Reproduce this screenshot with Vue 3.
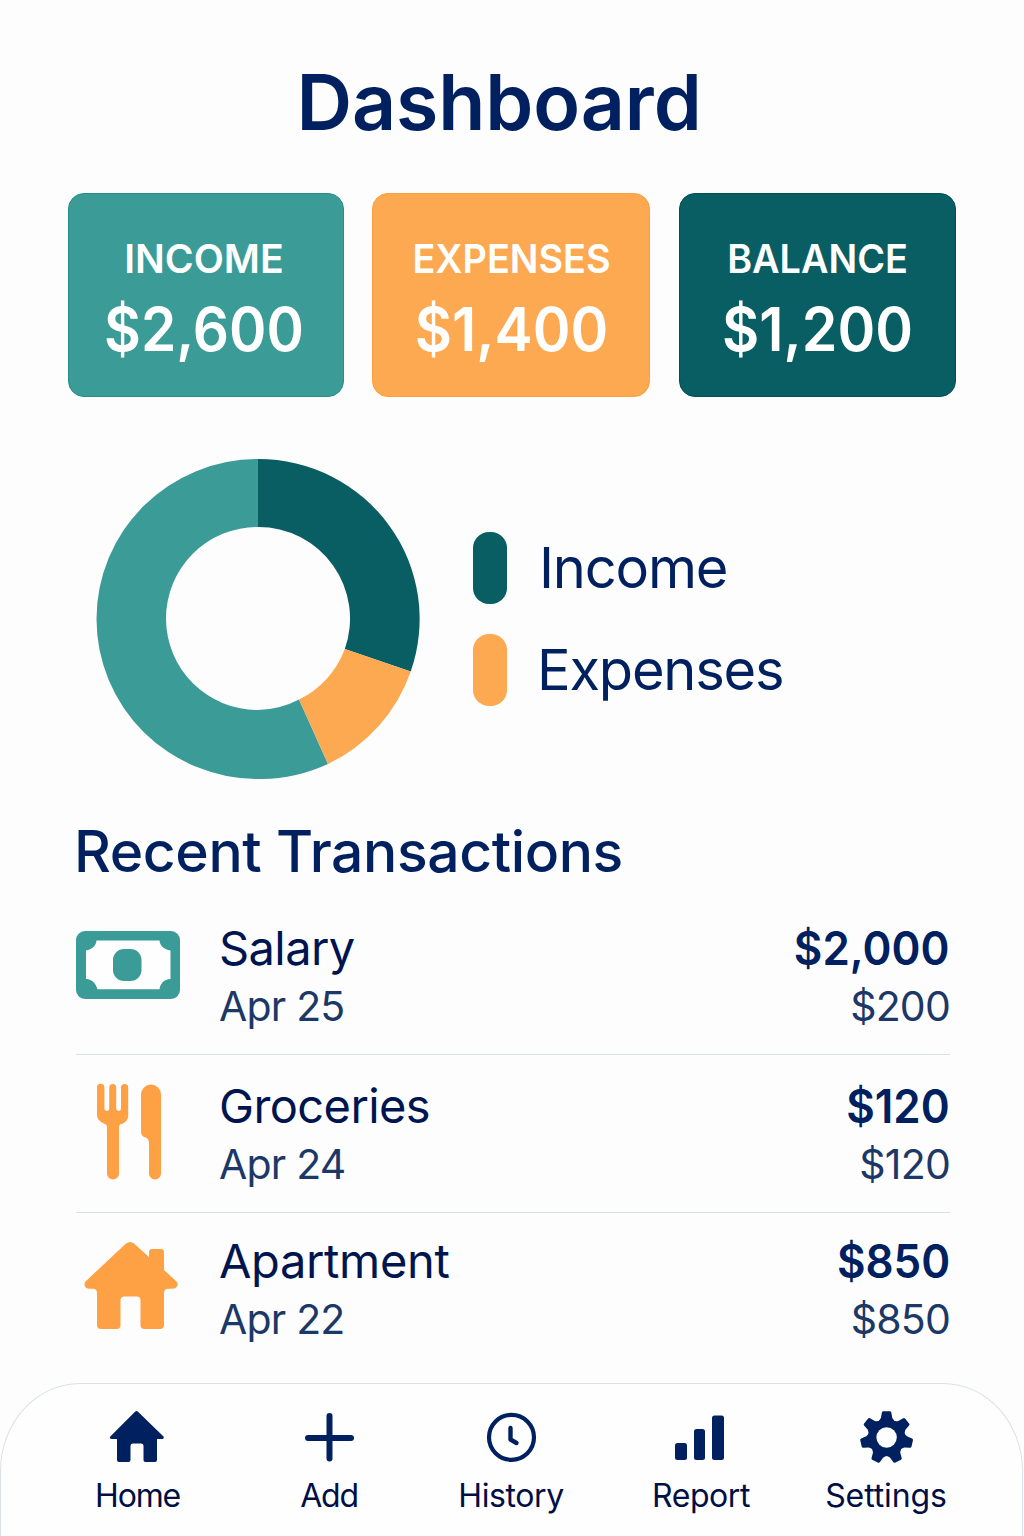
<script setup>
const cards = [
  { key: 'income', label: 'INCOME', value: '$2,600' },
  { key: 'expenses', label: 'EXPENSES', value: '$1,400' },
  { key: 'balance', label: 'BALANCE', value: '$1,200' },
]
const legend = [
  { key: 'income', label: 'Income' },
  { key: 'expenses', label: 'Expenses' },
]
const transactions = [
  { key: 'salary', name: 'Salary', date: 'Apr 25', amount: '$2,000', sub: '$200' },
  { key: 'groceries', name: 'Groceries', date: 'Apr 24', amount: '$120', sub: '$120' },
  { key: 'apartment', name: 'Apartment', date: 'Apr 22', amount: '$850', sub: '$850' },
]
const tabs = ['Home', 'Add', 'History', 'Report', 'Settings']
</script>

<template>
  <div class="screen">
    <h1 class="title">Dashboard</h1>

    <section class="cards">
      <div v-for="c in cards" :key="c.key" class="card" :class="'card-' + c.key">
        <div class="card-label">{{ c.label }}</div>
        <div class="card-value">{{ c.value }}</div>
      </div>
    </section>

    <section class="overview">
      <svg class="donut" viewBox="96 459 324 320" width="324" height="320">
        <path fill="#3b9b97" d="M258 459A161.5 160 0 0 0 96.500 619A161.5 160 0 0 0 258 779A161.5 160 0 0 0 328 764L299 699.500A91.5 91.5 0 0 1 258 710A91.5 91.5 0 0 1 166 619A91.5 91.5 0 0 1 258 527Z" />
        <path fill="#095e63" d="M258 459A161.5 160 0 0 1 410.7 671.5L344.8 649A91.5 91.5 0 0 0 258 527Z" />
        <path fill="#fda952" d="M410.7 671.5A161.5 160 0 0 1 328 764L299 699.5A91.5 91.5 0 0 0 344.8 649Z" />
      </svg>
      <ul class="legend">
        <li v-for="l in legend" :key="l.key" :class="'legend-' + l.key">
          <i class="swatch"></i><span>{{ l.label }}</span>
        </li>
      </ul>
    </section>

    <h2 class="heading">Recent Transactions</h2>

    <ul class="list">
      <li v-for="t in transactions" :key="t.key" class="row" :class="'row-' + t.key">
        <div class="row-icon">
          <svg v-if="t.key === 'salary'" viewBox="76 930 106 70" width="106" height="70">
            <rect x="76" y="931" width="104" height="68" rx="9" fill="#3b9b97" />
            <path fill="#fefefe" d="M96.500 940.500H159.500C160 946 164 949.500 170.500 950.500V979C164 979.500 160.500 983 159.500 989.300H97.500C95.500 983 92.500 979.500 86 979V950.500C92 949.500 96 946 96.500 940.500Z" />
            <rect x="113" y="949" width="28.500" height="32" rx="11" fill="#3b9b97" />
          </svg>
          <svg v-else-if="t.key === 'groceries'" viewBox="76 1083 106 98" width="106" height="98">
            <path fill="#fea145" d="M97 1087.500a3.700 3.700 0 0 1 7.400 0V1108.500a2.400 2.400 0 0 0 4.800 0V1087.500a3.500 3.500 0 0 1 7 0V1108.500a2.400 2.400 0 0 0 4.800 0V1087.500a3.600 3.600 0 0 1 7.200 0V1115.500C128 1120 125 1123.500 121 1124Q119 1124.500 119 1127V1173.500a6 6 0 0 1-12 0V1127Q107 1124.500 105 1124C100 1122 97 1119 97 1115Z" />
            <path fill="#fea145" d="M141 1094.500a10 10 0 0 1 20 0V1173.500a6 6 0 0 1-12 0V1143Q149 1138.500 145 1137.300Q141 1136 141 1131.500Z" />
          </svg>
          <svg v-else viewBox="76 1240 106 92" width="106" height="92">
            <path fill="#fea145" d="M126 1243.500Q130 1240.500 134 1243.500L149 1257V1252Q149 1249 152 1249H161Q164 1249 164 1252V1270L176.500 1281.500Q178.500 1284 177 1286.500Q175.500 1289 172 1288.800H168Q164 1289 164 1293V1325Q164 1329 160 1329H144.500Q140.500 1329 140.500 1325V1300.500Q140.500 1296.500 136.500 1296.500H124.500Q120.500 1296.500 120.500 1300.500V1325Q120.500 1329 116.500 1329H101Q97 1329 97 1325V1293Q97 1289 93 1288.800H89Q86 1289 84.700 1286Q83.800 1283.500 86 1281Z" />
          </svg>
        </div>
        <div class="row-main">
          <div class="name"><span>{{ t.name }}</span></div>
          <div class="date"><span>{{ t.date }}</span></div>
        </div>
        <div class="row-side">
          <div class="amount">{{ t.amount }}</div>
          <div class="sub"><span>{{ t.sub }}</span></div>
        </div>
      </li>
    </ul>

    <nav class="tabbar">
      <a v-for="t in tabs" :key="t" class="tab" :class="'tab-' + t.toLowerCase()">
        <svg v-if="t === 'Home'" viewBox="110 1410 56 54" width="56" height="54">
          <path fill="#00205f" d="M135 1411.700Q136.500 1410.500 138 1411.700L163.500 1436.500Q164.500 1439 162 1439H157V1460Q157 1462 155 1462H145.500Q143.500 1462 143.500 1460V1446Q143.500 1443.500 141 1443.500H133Q130.500 1443.500 130.500 1446V1460Q130.500 1462 128.500 1462H119Q117 1462 117 1460V1439H112Q109 1439 110.300 1436.500Z" />
        </svg>
        <svg v-else-if="t === 'Add'" viewBox="301 1410 56 54" width="56" height="54" fill="none" stroke="#00205f" stroke-width="6" stroke-linecap="round">
          <path d="M329.500 1416V1458.500M308 1438H351" />
        </svg>
        <svg v-else-if="t === 'History'" viewBox="483 1410 56 54" width="56" height="54" fill="none" stroke="#00205f">
          <circle cx="511.500" cy="1437.300" r="22.500" stroke-width="4.200" />
          <path d="M510.500 1428V1439.500L516.500 1443" stroke-width="4.400" stroke-linecap="round" stroke-linejoin="round" />
        </svg>
        <svg v-else-if="t === 'Report'" viewBox="673 1410 56 54" width="56" height="54" fill="#00205f">
          <rect x="675" y="1443" width="12" height="17" rx="2.500" />
          <rect x="694" y="1429" width="11" height="31" rx="2.500" />
          <rect x="712" y="1415.500" width="12" height="44.500" rx="2.500" />
        </svg>
        <svg v-else viewBox="858 1410 56 54" width="56" height="54">
          <g fill="#00205f">
            <path v-for="n in 7" :key="n" :transform="`rotate(${(n - 1) * 360 / 7} 886.6 1437.500)`" d="M883.200 1411.200H890Q891 1411.200 891.300 1412.500L892.300 1418Q893.500 1421 897.500 1422.500L886.600 1437.500L875.700 1422.500Q879.700 1421 880.900 1418L881.900 1412.500Q882.200 1411.200 883.200 1411.200Z" />
            <circle cx="886.600" cy="1437.500" r="18" />
          </g>
          <circle cx="886.600" cy="1437.500" r="10.200" fill="#fefefe" />
        </svg>
        <span class="tab-label">{{ t }}</span>
      </a>
    </nav>
  </div>
</template>

<style>
body {
  margin: 0;
  background: #fdfdfd;
}
</style>

<style scoped>
.screen {
  box-sizing: border-box;
  width: 1024px;
  height: 1536px;
  padding-top: 62px;
  display: flex;
  flex-direction: column;
  overflow: hidden;
  background: #fdfdfd;
  color: #00205f;
  font-family: Inter, "Liberation Sans", sans-serif;
  white-space: nowrap;
}
svg {
  display: block;
}
ul {
  margin: 0;
  padding: 0;
  list-style: none;
}
.title {
  margin: 0 0 51px;
  padding-right: 26px;
  font-size: 77px;
  line-height: 80px;
  font-weight: 600;
  letter-spacing: -0.100px;
  text-align: center;
}
.cards {
  display: grid;
  grid-template-columns: 276px 279px 277px;
  column-gap: 28px;
  padding-left: 68px;
}
.card {
  box-sizing: border-box;
  height: 204px;
  padding-top: 41px;
  border: 1px solid;
  border-radius: 16px;
  color: #fff;
  text-align: center;
}
.card-income {
  padding-right: 4px;
  background: #3b9b97;
  border-color: #25908a;
}
.card-expenses {
  margin-right: 1px;
  padding-left: 1px;
  background: #fda952;
  border-color: #fc9f40;
}
.card-balance {
  background: #095e63;
  border-color: #005056;
}
.card-label {
  font-size: 40px;
  line-height: 48px;
  font-weight: 600;
  transform: scaleX(0.945);
}
.card-income .card-label {
  transform: scaleX(0.98);
}
.card-value {
  margin-top: 11px;
  font-size: 60px;
  line-height: 70px;
  font-weight: 600;
  transform: scaleX(0.955);
}
.card-income .card-value {
  transform: scaleX(0.945);
}
.overview {
  display: flex;
  margin-top: 62px;
  padding-left: 96px;
}
.legend {
  margin: 73px 0 0 53px;
}
.legend li {
  display: flex;
  align-items: center;
  height: 72px;
  margin-bottom: 30px;
  font-size: 56px;
  line-height: 72px;
  letter-spacing: -1.200px;
}
.swatch {
  width: 34px;
  height: 72px;
  margin-right: 30px;
  border-radius: 16px;
}
.legend-income .swatch {
  margin-right: 32px;
  background: #095e63;
}
.legend-expenses .swatch {
  background: #fda952;
}
.heading {
  margin: 37px 0 0;
  padding-left: 74px;
  font-size: 57px;
  line-height: 72px;
  font-weight: 500;
  letter-spacing: -0.400px;
}
.list {
  margin: 9px 74px 0 76px;
}
.row {
  box-sizing: border-box;
  display: flex;
  height: 158px;
  padding-top: 22px;
  border-bottom: 1.500px solid #dce1e9;
}
.row-apartment {
  padding-top: 19px;
  border-bottom: 0;
}
.row-icon {
  width: 143px;
}
.row-salary .row-icon {
  padding-top: 11px;
}
.row-groceries .row-icon {
  padding-top: 6px;
}
.row-apartment .row-icon {
  padding-top: 8px;
}
.row-main {
  flex: 1;
}
.row-side {
  text-align: right;
}
.name,
.amount {
  height: 58px;
  font-size: 47px;
  line-height: 57px;
}
.name {
  color: #00154f;
  letter-spacing: -0.600px;
}
.row-apartment .name {
  letter-spacing: -0.350px;
}
.amount {
  font-weight: 600;
  transform: scaleX(0.935);
  transform-origin: right;
}
.date,
.sub {
  height: 58px;
  font-size: 41px;
  line-height: 58px;
  letter-spacing: -0.800px;
  color: #1b3866;
}
.tabbar {
  box-sizing: border-box;
  display: grid;
  flex: none;
  grid-template-columns: 191px 192px 172px 208px 162px;
  width: 1023px;
  height: 170px;
  margin-top: auto;
  margin-bottom: -17px;
  padding: 26px 0 0 41px;
  border: 1.500px solid #dce1e9;
  border-radius: 80px 80px 0 0 / 88px 88px 0 0;
  background: #fefefe;
}
.tab {
  display: flex;
  flex-direction: column;
  align-items: center;
}
.tab-label {
  margin-top: 12px;
  font-size: 32px;
  line-height: 40px;
  letter-spacing: -0.400px;
  color: #000f45;
}
.tab-home .tab-label,
.tab-add .tab-label {
  letter-spacing: -1.200px;
}
.tab-settings .tab-label {
  letter-spacing: -0.100px;
}
</style>
